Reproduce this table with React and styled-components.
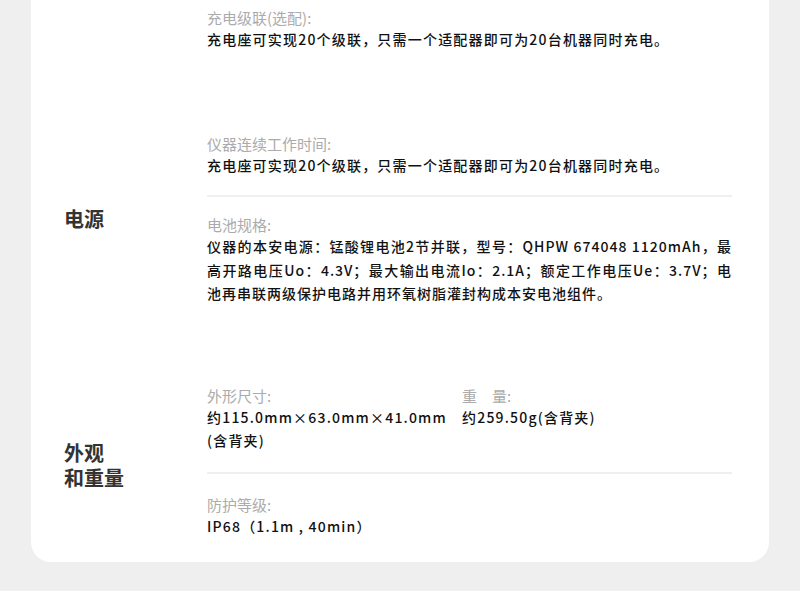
import React from "react";
import styled, { createGlobalStyle } from "styled-components";

const Global = createGlobalStyle`
  html, body { margin: 0; padding: 0; background: #efefef; }
  body { font-family: "Noto Sans CJK SC", "Noto Sans", sans-serif; }
`;

const Page = styled.div`
  background: #efefef;
  padding: 0 31px 28px;
  min-height: 591px;
  box-sizing: border-box;
`;

const Card = styled.div`
  background: #fff;
  border-radius: 0 0 20px 20px;
  padding: 8px 37px 24px 33px;
`;

const Section = styled.div`
  display: flex;
  margin-top: ${(p) => p.$gap || 0}px;
`;

const Heading = styled.div`
  width: 143px;
  flex: none;
  align-self: center;
  margin-top: ${(p) => p.$shift || 0}px;
  font-size: 20px;
  line-height: 25px;
  font-weight: 700;
  color: #333;
`;

const Items = styled.div`
  flex: 1;
  min-width: 0;
`;

const Item = styled.div`
  display: grid;
  grid-template-columns: ${(p) => (p.$cols === 2 ? "255px 1fr" : "1fr")};
  padding: ${(p) => p.$pt || 0}px 0 ${(p) => p.$pb || 0}px;
  border-bottom: ${(p) => (p.$divider ? "2px solid #efefef" : "none")};
`;

const Field = styled.div``;

const Label = styled.div`
  font-size: 15px;
  line-height: 20px;
  font-weight: 400;
  color: #ababab;
`;

const Value = styled.div`
  font-size: 14px;
  line-height: 23.5px;
  font-weight: 500;
  color: #111;
  letter-spacing: ${(p) => (p.$justify ? "1px" : "1.2px")};
  text-align: ${(p) => (p.$justify ? "justify" : "left")};
`;

export default function App() {
  return (
    <>
      <Global />
      <Page>
        <Card>
          <Section>
            <Heading />
            <Items>
              <Item>
                <Field>
                  <Label>充电级联(选配):</Label>
                  <Value>充电座可实现20个级联，只需一个适配器即可为20台机器同时充电。</Value>
                </Field>
              </Item>
            </Items>
          </Section>
          <Section $gap={82}>
            <Heading $shift={-2}>电源</Heading>
            <Items>
              <Item $pb={18} $divider>
                <Field>
                  <Label>仪器连续工作时间:</Label>
                  <Value>充电座可实现20个级联，只需一个适配器即可为20台机器同时充电。</Value>
                </Field>
              </Item>
              <Item $pt={18}>
                <Field>
                  <Label>电池规格:</Label>
                  <Value $justify>
                    仪器的本安电源：锰酸锂电池2节并联，型号：QHPW 674048 1120mAh，最高开路电压Uo：4.3V；最大输出电流Io：2.1A；额定工作电压Ue：3.7V；电池再串联两级保护电路并用环氧树脂灌封构成本安电池组件。
                  </Value>
                </Field>
              </Item>
            </Items>
          </Section>
          <Section $gap={80}>
            <Heading $shift={7}>
              外观
              <br />
              和重量
            </Heading>
            <Items>
              <Item $cols={2} $pb={19} $divider>
                <Field>
                  <Label>外形尺寸:</Label>
                  <Value>约115.0mm×63.0mm×41.0mm (含背夹)</Value>
                </Field>
                <Field>
                  <Label>重　量:</Label>
                  <Value>约259.50g(含背夹)</Value>
                </Field>
              </Item>
              <Item $pt={21}>
                <Field>
                  <Label>防护等级:</Label>
                  <Value>IP68（1.1m , 40min）</Value>
                </Field>
              </Item>
            </Items>
          </Section>
        </Card>
      </Page>
    </>
  );
}
